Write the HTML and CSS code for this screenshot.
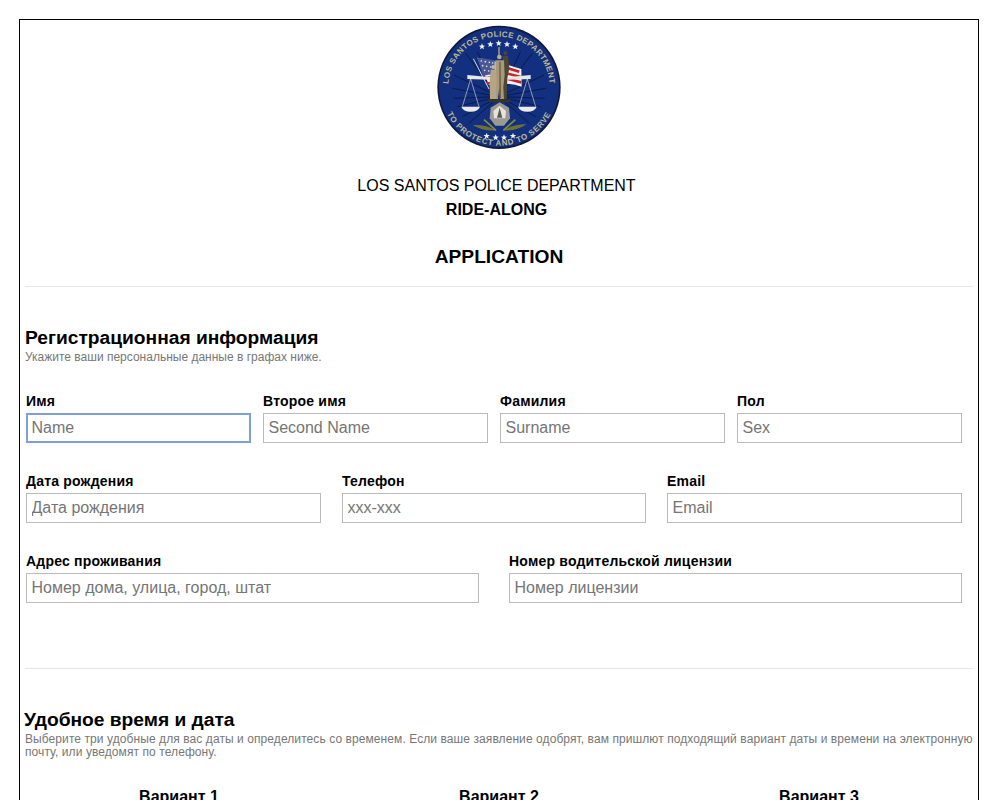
FILE: index.html
```html
<!DOCTYPE html>
<html lang="ru">
<head>
  <meta charset="UTF-8" />
  <title>LSPD Ride-Along Application</title>
  <link rel="stylesheet" href="styles.css">
</head>
<body>
  <div class="form-container">
    <header class="form-header">
      <svg class="emblem" viewBox="40 20 390 375" aria-label="LSPD seal">
        <defs>
          <path id="arcTop" d="M83 207 A152 152 0 0 1 387 207" />
          <path id="arcBottom" d="M60 207 A175 175 0 0 0 410 207" />
          <polygon id="star" points="0,-10 2.6,-3.2 9.5,-3.1 4,1.2 5.9,8 0,4 -5.9,8 -4,1.2 -9.5,-3.1 -2.6,-3.2" />
        </defs>
        <circle cx="235" cy="207" r="185" fill="#11193a" />
        <circle cx="235" cy="207" r="180" fill="#12307f" />
        <g stroke="#0a1a4c" stroke-width="3">
          <path d="M235 235 L100 170 M235 235 L95 210 M235 235 L100 240 M235 235 L110 265 M235 235 L125 295 M235 235 L145 315 M235 235 L325 315 M235 235 L345 295 M235 235 L360 265 M235 235 L372 240 M235 235 L375 210 M235 235 L370 170 M235 235 L335 105 M235 235 L300 100 M235 235 L170 100 M235 235 L135 105" />
        </g>
        <text class="seal-text" font-size="24" letter-spacing="1.2"><textPath href="#arcTop" startOffset="50%" text-anchor="middle">LOS SANTOS POLICE DEPARTMENT</textPath></text>
        <text class="seal-text" font-size="24" letter-spacing="2"><textPath href="#arcBottom" startOffset="50%" text-anchor="middle">TO PROTECT AND TO SERVE</textPath></text>
        <g fill="#f2f2f2">
          <use href="#star" x="184" y="85" /><use href="#star" x="209" y="78" /><use href="#star" x="234" y="75" /><use href="#star" x="259" y="78" /><use href="#star" x="284" y="85" />
          <use href="#star" x="198" y="353" /><use href="#star" x="225" y="358" /><use href="#star" x="250" y="358" /><use href="#star" x="277" y="353" />
        </g>
        <!-- flag -->
        <path d="M170 118 Q215 125 262 140 L302 152 L303 205 Q260 190 205 200 Z" fill="#f3f3f3" />
        <path d="M262 150 L296 160 M262 166 L300 176 M262 182 L302 192" stroke="#c8242e" stroke-width="8" fill="none" />
        <path d="M186 180 L222 176 M194 196 L222 192" stroke="#c8242e" stroke-width="7" fill="none" />
        <path d="M170 118 Q195 120 222 126 L222 168 Q200 168 187 174 Z" fill="#4a5796" />
        <g fill="#e6e8f2">
          <circle cx="182" cy="128" r="2.5" /><circle cx="194" cy="130" r="2.5" /><circle cx="206" cy="132" r="2.5" /><circle cx="216" cy="134" r="2.5" />
          <circle cx="186" cy="142" r="2.5" /><circle cx="198" cy="144" r="2.5" /><circle cx="210" cy="146" r="2.5" />
          <circle cx="192" cy="156" r="2.5" /><circle cx="204" cy="158" r="2.5" /><circle cx="216" cy="158" r="2.5" />
        </g>
        <path d="M158 121 L205 212" stroke="#d8d8d8" stroke-width="3" />
        <!-- balance beam -->
        <path d="M140 170 L205 176 L265 176 L330 170 L330 182 L262 184 L208 184 L140 182 Z" fill="#e8e8e2" />
        <!-- left pan -->
        <path d="M150 182 L125 265 M150 182 L175 265" stroke="#d2d2cc" stroke-width="2" fill="none" />
        <path d="M122 265 L178 265 Q172 280 150 280 Q128 280 122 265 Z" fill="#ecece6" />
        <!-- right pan -->
        <path d="M320 182 L295 265 M320 182 L345 265" stroke="#d2d2cc" stroke-width="2" fill="none" />
        <path d="M292 265 L348 265 Q342 280 320 280 Q298 280 292 265 Z" fill="#ecece6" />
        <!-- statue figures -->
        <rect x="233" y="86" width="4" height="30" fill="#b8aa8a" />
        <circle cx="254" cy="104" r="6" fill="#4d4634" />
        <path d="M246 112 L262 112 L266 150 L260 180 L258 242 L248 242 Z" fill="#4d4634" />
        <circle cx="236" cy="116" r="7" fill="#b8aa8a" />
        <path d="M224 126 L250 126 L252 170 L248 205 L250 242 L238 242 L236 205 L232 242 L222 242 L224 190 Z" fill="#a8997a" />
        <path d="M236 130 L240 130 L241 240 L236 240 Z" fill="#6b6249" />
        <circle cx="218" cy="146" r="6" fill="#c4b696" />
        <path d="M210 154 L226 154 L228 185 L226 242 L208 242 L207 195 Z" fill="#b3a586" />
        <path d="M200 243 L272 243 L266 252 L206 252 Z" fill="#3a3428" />
        <!-- badge -->
        <path d="M237 252 L265 268 L268 300 L250 322 L224 322 L207 300 L210 268 Z" fill="#9b9b93" />
        <path d="M237 262 L256 278 L254 300 L220 300 L218 278 Z" fill="#e4e4dc" />
        <path d="M237 268 L245 298 L229 298 Z" fill="#5c5c54" />
        <!-- laurels -->
        <path d="M156 320 Q195 318 226 336 Q190 340 156 320 Z" fill="#6d7233" />
        <path d="M318 318 Q282 316 248 336 Q284 340 318 318 Z" fill="#6d7233" />
        <path d="M190 304 L226 336 M284 304 L248 336" stroke="#8a8a3e" stroke-width="5" />
      </svg>
      <p class="dept-name">LOS SANTOS POLICE DEPARTMENT</p>
      <p class="ride-along">RIDE-ALONG</p>
      <h1 class="form-title">APPLICATION</h1>
    </header>

    <section class="form-section section-personal">
      <h2>Регистрационная информация</h2>
      <p class="hint">Укажите ваши персональные данные в графах ниже.</p>

      <div class="row row-four">
        <div class="field">
          <label for="name">Имя</label>
          <input type="text" id="name" placeholder="Name" autofocus />
        </div>
        <div class="field">
          <label for="secondName">Второе имя</label>
          <input type="text" id="secondName" placeholder="Second Name" />
        </div>
        <div class="field">
          <label for="surname">Фамилия</label>
          <input type="text" id="surname" placeholder="Surname" />
        </div>
        <div class="field">
          <label for="sex">Пол</label>
          <input type="text" id="sex" placeholder="Sex" />
        </div>
      </div>

      <div class="row row-three">
        <div class="field">
          <label for="birth">Дата рождения</label>
          <input type="text" id="birth" placeholder="Дата рождения" />
        </div>
        <div class="field">
          <label for="phone">Телефон</label>
          <input type="text" id="phone" placeholder="xxx-xxx" />
        </div>
        <div class="field">
          <label for="email">Email</label>
          <input type="email" id="email" placeholder="Email" />
        </div>
      </div>

      <div class="row row-two">
        <div class="field">
          <label for="address">Адрес проживания</label>
          <input type="text" id="address" placeholder="Номер дома, улица, город, штат" />
        </div>
        <div class="field">
          <label for="license">Номер водительской лицензии</label>
          <input type="text" id="license" placeholder="Номер лицензии" />
        </div>
      </div>
    </section>

    <section class="form-section section-time">
      <h2>Удобное время и дата</h2>
      <p class="hint">Выберите три удобные для вас даты и определитесь со временем. Если ваше заявление одобрят, вам пришлют подходящий вариант даты и времени на электронную почту, или уведомят по телефону.</p>

      <div class="options">
        <h3>Вариант 1</h3>
        <h3>Вариант 2</h3>
        <h3>Вариант 3</h3>
      </div>
    </section>
  </div>
</body>
</html>
```

FILE: styles.css
```css
* {
  margin: 0; padding: 0; box-sizing: border-box;
  font-family: "Liberation Sans", Arial, sans-serif;
}

html, body {
  height: 100vh;
  overflow: hidden;
}

body {
  background: #fff;
  color: #000;
  padding: 19px 0 0 19px;
}

.form-container {
  width: 960px;
  min-height: 900px;
  border: 1px solid #000;
  padding: 0 5px;
}

.form-header {
  text-align: center;
  padding-top: 5px;
  padding-bottom: 18px;
  border-bottom: 1px solid #e6e6e6;
}

.emblem {
  display: block;
  width: 130px;
  height: 125px;
  margin: 0 auto;
}

.seal-text {
  fill: #bdb892;
  font-family: "Liberation Serif", serif;
  font-weight: bold;
}

.dept-name {
  margin-top: 27px;
  padding-right: 5px;
  font-size: 16px;
  line-height: 18px;
}

.ride-along {
  margin-top: 6px;
  padding-right: 5px;
  font-size: 16px;
  line-height: 18px;
  font-weight: bold;
}

.form-title {
  margin-top: 26px;
  font-size: 19.2px;
  line-height: 23px;
}

.form-section h2 {
  font-size: 19.2px;
  line-height: 23px;
  font-weight: bold;
}

.hint {
  margin-top: 2px;
  font-size: 12px;
  line-height: 13px;
  color: #777;
}

.section-personal {
  padding-top: 39px;
  padding-bottom: 65px;
  border-bottom: 1px solid #e6e6e6;
}

.section-time {
  padding-top: 39px;
}

.section-time h2 {
  margin-left: -1px;
}

.section-time .hint {
  letter-spacing: 0.08px;
}

.row {
  display: grid;
  padding-left: 1px;
  width: 937px;
  margin-top: 30px;
}

.row-four {
  grid-template-columns: repeat(4, 225px);
  column-gap: 12px;
  margin-top: 29px;
}

.row-three {
  grid-template-columns: 295px 304px 295px;
  column-gap: 21px;
}

.row-two {
  grid-template-columns: 453px 453px;
  column-gap: 30px;
}

.field label {
  display: block;
  font-size: 14px;
  line-height: 16px;
  font-weight: bold;
  letter-spacing: 0.2px;
  margin-bottom: 4px;
}

.field input {
  display: block;
  width: 100%;
  height: 30px;
  padding: 0 4.5px;
  border: 1px solid #bbb;
  background: #fff;
  font-size: 16px;
  color: #000;
  outline: none;
}

.field input::placeholder {
  color: #757575;
  opacity: 1;
}

.field input:focus {
  border: 2px solid #7f9fdc;
  padding: 0 3.5px;
}

.options {
  display: grid;
  grid-template-columns: repeat(3, 320px);
  margin: 29px 0 0 -6px;
  text-align: center;
}

.options h3 {
  font-size: 16px;
  line-height: 18px;
  font-weight: bold;
}
```
